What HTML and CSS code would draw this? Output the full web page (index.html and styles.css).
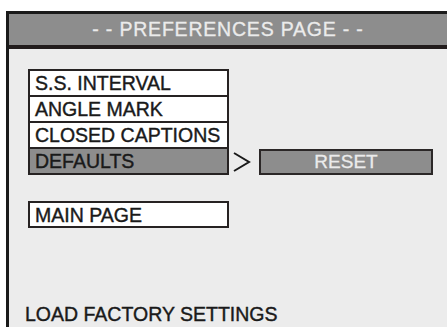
FILE: index.html
```html
<!DOCTYPE html>
<html>
	<head>
		<meta charset="UTF-8">
		<title>Preferences</title>
		<link rel="stylesheet" href="styles.css">
	</head>
	<body>
		<div class="screen">
			<div class="title">- - PREFERENCES PAGE - -</div>
			<div class="content">
				<ul class="menu">
					<li class="item">S.S. INTERVAL</li>
					<li class="item">ANGLE MARK</li>
					<li class="item">CLOSED CAPTIONS</li>
					<li class="row">
						<span class="item on">DEFAULTS</span>
						<svg class="arrow" width="18" height="20" viewBox="0 0 18 20">
							<polyline points="1,1 16,10 1,19" fill="none" stroke="#1a1a1a" stroke-width="2"/>
						</svg>
						<span class="reset">RESET</span>
					</li>
				</ul>
				<div class="item main">MAIN PAGE</div>
				<p class="hint">LOAD FACTORY SETTINGS</p>
			</div>
		</div>
	</body>
</html>
```

FILE: styles.css
```css
*{margin:0;padding:0;box-sizing:border-box;}
ul{list-style:none;}
html,body{height:100%;}
body{
	background:#fff;
	font-family:"Liberation Sans",Arial,sans-serif;
	overflow:hidden;
}
.screen{
	margin:11px 0 0 6px;
	height:316px;
	border-top:3px solid #1a1a1a;
	border-left:3px solid #1a1a1a;
	background:#ececec;
	overflow:hidden;
}
.title{
	height:35px;
	line-height:31px;
	background:#8d8d8d;
	border-bottom:4px solid #221c1c;
	color:#ebebeb;
	font-size:19.5px;
	letter-spacing:0.8px;
	text-align:center;
	-webkit-text-stroke:0.3px #ebebeb;
}
.content{
	padding:20px 0 0 16px;
}
.menu{
	margin-left:3px;
}
.item{
	display:block;
	width:201px;
	height:28px;
	border:2px solid #262222;
	background:#fff;
	color:#1a1a1a;
	font-size:19.5px;
	line-height:24px;
	padding-left:5px;
	margin-top:-2px;
	white-space:nowrap;
	-webkit-text-stroke:0.4px #1a1a1a;
}
.menu .item:first-child{margin-top:0;}
.row{
	display:flex;
	align-items:flex-end;
	margin-top:-2px;
}
.row .item{margin-top:0;}
.item.on{background:#8d8d8d;}
.arrow{
	margin:0 0 3px 4px;
	flex:none;
}
.reset{
	margin-left:8px;
	width:174px;
	height:26px;
	border:2px solid #2b2727;
	background:#8d8d8d;
	color:#ebebeb;
	font-size:19px;
	line-height:22px;
	text-align:center;
	-webkit-text-stroke:0.3px #ebebeb;
}
.main{
	margin:26px 0 0 3px;
	height:27px;
}
.hint{
	margin-top:76px;
	font-size:19.5px;
	line-height:20px;
	color:#1a1a1a;
	-webkit-text-stroke:0.4px #1a1a1a;
}
```
